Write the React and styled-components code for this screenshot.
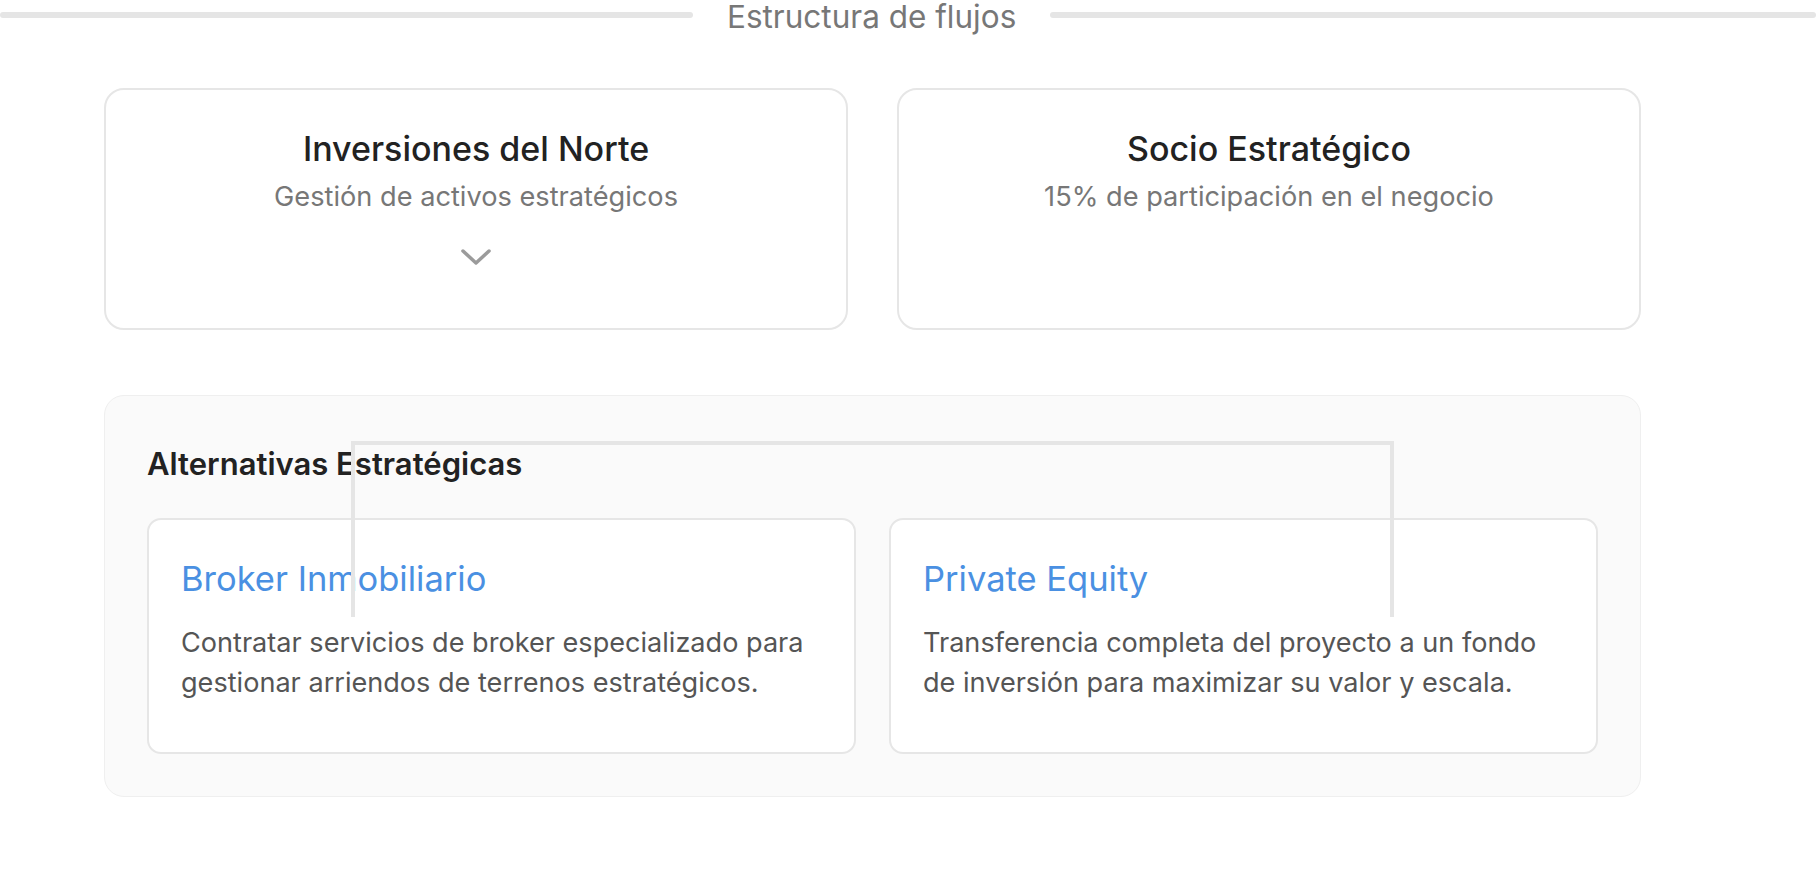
import styled, { createGlobalStyle } from "styled-components";

const GlobalStyle = createGlobalStyle`
  html, body {
    margin: 0;
    padding: 0;
    background: #ffffff;
    font-family: Inter, "Noto Sans", "Liberation Sans", sans-serif;
    overflow: hidden;
  }
`;

const Page = styled.div`
  width: 1816px;
  height: 882px;
  background: #ffffff;
`;

const Header = styled.div`
  display: grid;
  grid-template-columns: 693px auto 1fr;
  column-gap: 34px;
  align-items: center;
`;

const HeaderLine = styled.div`
  height: 6px;
  margin-bottom: 3px;
  border-radius: 3px;
  background: #e5e5e5;
`;

const HeaderTitle = styled.h2`
  margin: 0;
  font-size: 31.5px;
  line-height: 33px;
  font-weight: 400;
  color: #777777;
  white-space: nowrap;
`;

const Content = styled.div`
  width: 1537px;
  margin: 55px 0 0 104px;
  display: flex;
  flex-direction: column;
  gap: 65px;
`;

const TopRow = styled.div`
  display: grid;
  grid-template-columns: 1fr 1fr;
  gap: 49px;
`;

const EntityCard = styled.div`
  box-sizing: border-box;
  height: 242px;
  border: 2px solid #e6e6e6;
  border-radius: 20px;
  background: #ffffff;
  padding: 39px 32px;
  display: flex;
  flex-direction: column;
  align-items: center;
  text-align: center;
`;

const EntityName = styled.div`
  font-size: 34px;
  line-height: 40px;
  font-weight: 500;
  color: #222222;
`;

const EntityNote = styled.div`
  margin-top: 11px;
  font-size: 27.2px;
  line-height: 34px;
  color: #777777;
`;

const Chevron = styled.svg`
  margin-top: 34px;
  display: block;
`;

const Panel = styled.section`
  position: relative;
  box-sizing: border-box;
  border: 1px solid #efefef;
  border-radius: 20px;
  background: #fafafa;
  padding: 51px 42px 42px;
`;

const PanelTitle = styled.h3`
  margin: 0 0 37px;
  font-size: 31px;
  line-height: 34px;
  font-weight: 600;
  color: #222222;
`;

const OptionGrid = styled.div`
  display: grid;
  grid-template-columns: 1fr 1fr;
  gap: 33px;
`;

const OptionCard = styled.div`
  box-sizing: border-box;
  min-height: 236px;
  border: 2px solid #e6e6e6;
  border-radius: 14px;
  background: #ffffff;
  padding: 41px 32px 40px;
`;

const OptionName = styled.div`
  font-size: 34.5px;
  line-height: 36px;
  font-weight: 400;
  color: #4a90e2;
  margin-bottom: 26px;
`;

const OptionText = styled.p`
  margin: 0;
  font-size: 27.1px;
  line-height: 40px;
  color: #555555;
`;

/* bracket connecting the two alternatives, drawn over the panel */
const Connector = styled.div`
  position: absolute;
  left: 246px;
  top: 45px;
  width: 1043px;
  height: 176px;
  box-sizing: border-box;
  border: 4px solid #e5e5e5;
  border-bottom: none;
  pointer-events: none;
`;

const entities = [
  { name: "Inversiones del Norte", note: "Gestión de activos estratégicos", more: true },
  { name: "Socio Estratégico", note: "15% de participación en el negocio", more: false },
];

const options = [
  {
    name: "Broker Inmobiliario",
    text: "Contratar servicios de broker especializado para gestionar arriendos de terrenos estratégicos.",
  },
  {
    name: "Private Equity",
    text: "Transferencia completa del proyecto a un fondo de inversión para maximizar su valor y escala.",
  },
];

export default function App() {
  return (
    <Page>
      <GlobalStyle />
      <Header>
        <HeaderLine />
        <HeaderTitle>Estructura de flujos</HeaderTitle>
        <HeaderLine />
      </Header>
      <Content>
        <TopRow>
          {entities.map((e) => (
            <EntityCard key={e.name}>
              <EntityName>{e.name}</EntityName>
              <EntityNote>{e.note}</EntityNote>
              {e.more && (
                <Chevron width="32" height="18" viewBox="0 0 32 18">
                  <polyline
                    points="3,3 16,15 29,3"
                    fill="none"
                    stroke="#9b9b9b"
                    strokeWidth="3.5"
                    strokeLinecap="round"
                    strokeLinejoin="round"
                  />
                </Chevron>
              )}
            </EntityCard>
          ))}
        </TopRow>
        <Panel>
          <PanelTitle>Alternativas Estratégicas</PanelTitle>
          <OptionGrid>
            {options.map((o) => (
              <OptionCard key={o.name}>
                <OptionName>{o.name}</OptionName>
                <OptionText>{o.text}</OptionText>
              </OptionCard>
            ))}
          </OptionGrid>
          <Connector />
        </Panel>
      </Content>
    </Page>
  );
}
